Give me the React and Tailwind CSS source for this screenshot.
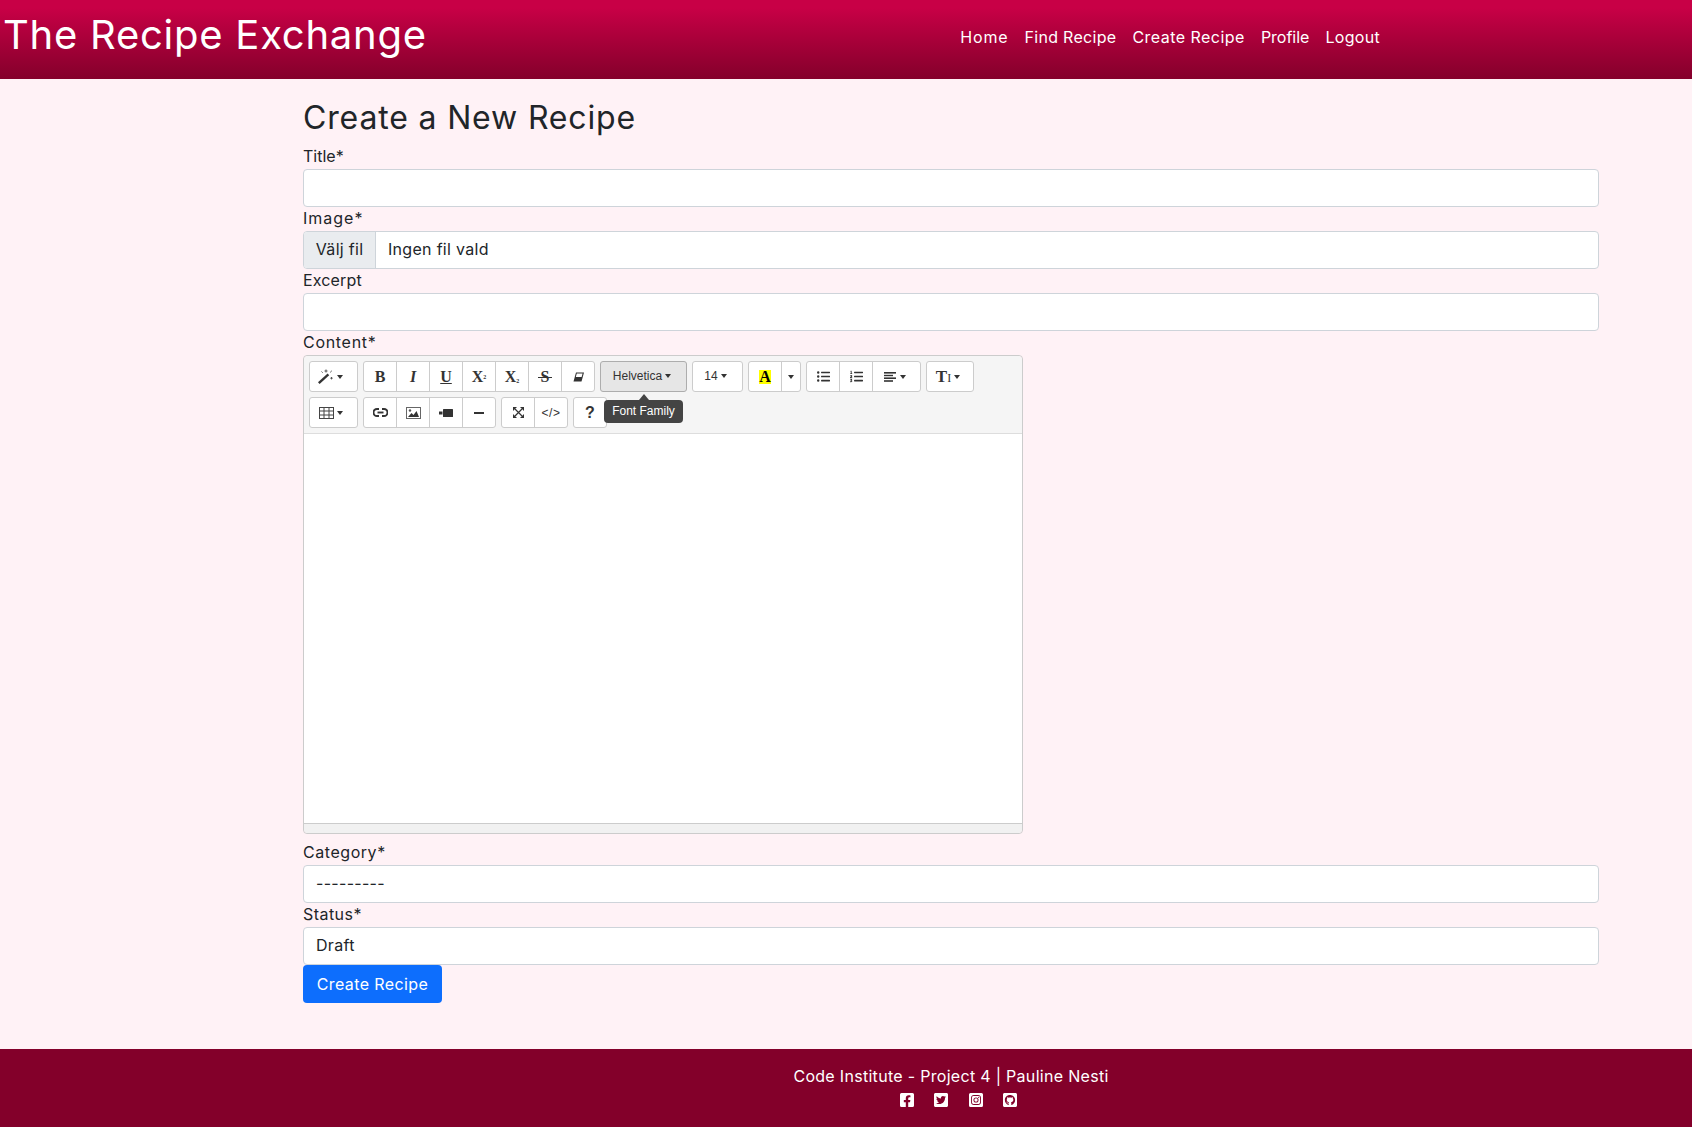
import React from "react";
import {
  FaFacebookSquare,
  FaTwitterSquare,
  FaInstagramSquare,
  FaGithubSquare,
  FaListUl,
  FaListOl,
} from "react-icons/fa";

function Caret() {
  return <span className="w-0 h-0 border-x-[3px] border-x-transparent border-t-[4px] border-t-[#333] shrink-0" />;
}

function Serif({ children, className = "" }) {
  return <span className={`font-['Liberation_Serif',serif] font-bold text-[16px] text-[#333] leading-none ${className}`}>{children}</span>;
}

function MagicIcon() {
  return (
    <svg width="16" height="15" viewBox="0 0 16 15" fill="#333">
      <path d="M0 13.2l9.6-8.7 1.6 1.7-9.6 8.7z" />
      <path d="M8 0.5v3M6.5 2h3M13.5 8v2.4M12.3 9.2h2.4M13.8 1.8l-1.6 1.6M3.5 2.5l1.2 1.2" stroke="#555" strokeWidth="1" fill="none" />
    </svg>
  );
}

function EraserIcon() {
  return (
    <svg width="11" height="10" viewBox="0 0 11 10">
      <path d="M3 0.5h8L8.5 9.5H0.5z" fill="#333" />
      <path d="M3.8 1.5h5.8L8.6 5H2.8z" fill="#fff" />
    </svg>
  );
}

function TableIcon() {
  return (
    <svg width="15" height="12" viewBox="0 0 15 12" fill="none" stroke="#444" strokeWidth="1">
      <rect x="0.5" y="0.5" width="14" height="11" />
      <path d="M5 1v10M10 1v10M1 4h13M1 8h13" />
    </svg>
  );
}

function LinkIcon() {
  return (
    <svg width="15" height="9" viewBox="0 0 15 9" fill="none" stroke="#333" strokeWidth="1.9">
      <path d="M6 1H4a3.5 3.5 0 0 0 0 7h2" />
      <path d="M9 1h2a3.5 3.5 0 0 1 0 7H9" />
      <path d="M4.5 4.5h6" />
    </svg>
  );
}

function PictureIcon() {
  return (
    <svg width="15" height="12" viewBox="0 0 15 12">
      <rect x="0.5" y="0.5" width="14" height="11" fill="#fff" stroke="#666" />
      <path d="M2 10l3.5-4 2 2 3-4 2.5 6z" fill="#333" />
      <circle cx="4" cy="3.5" r="1.2" fill="#555" />
    </svg>
  );
}

function VideoIcon() {
  return (
    <svg width="14" height="8" viewBox="0 0 14 8" fill="#333">
      <rect x="4" y="0" width="10" height="8" rx="0.5" />
      <path d="M0 2.5h3.5v3H0z" />
    </svg>
  );
}

function ExpandIcon() {
  return (
    <svg width="11" height="11" viewBox="0 0 11 11" fill="#333" stroke="#333">
      <path d="M2 2l7 7M9 2l-7 7" strokeWidth="1.2" />
      <path d="M0 0h4L0 4zM11 0v4L7 0zM0 11V7l4 4zM11 11H7l4-4z" stroke="none" />
    </svg>
  );
}

function AlignIcon() {
  return (
    <svg width="12" height="10" viewBox="0 0 12 10" fill="#333">
      <rect y="0" width="12" height="1.6" />
      <rect y="2.8" width="9" height="1.4" />
      <rect y="5.4" width="12" height="1.6" />
      <rect y="8.2" width="9" height="1.6" />
    </svg>
  );
}

function Cell({ width = "w-[33px]", children, last, className = "" }) {
  return (
    <div className={`${width} h-full flex items-center justify-center gap-[3px] ${last ? "" : "border-r border-[#ccc]"} ${className}`}>
      {children}
    </div>
  );
}

function Group({ children }) {
  return <div className="flex h-[31px] bg-white border border-[#ccc] rounded-[3px] shrink-0">{children}</div>;
}

function Field({ label, tracking = "tracking-[0.3px]", children }) {
  return (
    <div>
      <label className={`block h-[24px] leading-[22px] text-[16px] ${tracking}`}>{label}</label>
      {children}
    </div>
  );
}

function TextInput() {
  return <input type="text" className="block w-full h-[38px] bg-white border border-[#ced4da] rounded-[4px] px-3" />;
}

function SelectInput({ value }) {
  return (
    <select className="block w-full h-[38px] bg-white border border-[#ced4da] rounded-[4px] px-3 pb-[2px] appearance-none text-[16px] tracking-[0.3px] text-[#212529]">
      <option>{value}</option>
    </select>
  );
}

function Editor() {
  return (
    <div className="w-[720px] border border-[#ccc] rounded-[4px] font-['Liberation_Sans',sans-serif]">
      <div className="relative bg-[#f5f5f5] border-b border-[#ddd] p-[5px] flex flex-col gap-[5px] rounded-t-[4px]">
        <div className="flex gap-[5px]">
          <Group>
            <Cell width="w-[47px]" className="pr-[6px]" last>
              <MagicIcon />
              <Caret />
            </Cell>
          </Group>
          <Group>
            <Cell><Serif>B</Serif></Cell>
            <Cell><Serif className="italic">I</Serif></Cell>
            <Cell><Serif className="underline">U</Serif></Cell>
            <Cell><Serif>X<sup className="text-[6px]">2</sup></Serif></Cell>
            <Cell><Serif>X<sub className="text-[6px]">2</sub></Serif></Cell>
            <Cell>
              <span className="relative flex">
                <Serif>S</Serif>
                <span className="absolute left-[-3px] right-[-3px] top-[8px] h-[1px] bg-[#333]" />
              </span>
            </Cell>
            <Cell width="w-[32px]" last><EraserIcon /></Cell>
          </Group>
          <div className="flex h-[31px] w-[87px] items-center justify-center gap-[3px] pr-[3px] pb-[2px] bg-[#e6e6e6] border border-[#adadad] rounded-[3px] text-[12px] text-[#333] shrink-0">
            Helvetica <Caret />
          </div>
          <Group>
            <Cell width="w-[49px]" className="pr-[4px] pb-[2px]" last>
              <span className="text-[12px] text-[#333]">14</span>
              <Caret />
            </Cell>
          </Group>
          <Group>
            <Cell>
              <span className="w-[12px] h-[14px] bg-[#ff0] flex items-center justify-center font-['Liberation_Serif',serif] font-bold text-[16px] leading-none text-black">A</span>
            </Cell>
            <Cell width="w-[18px]" last><Caret /></Cell>
          </Group>
          <Group>
            <Cell><FaListUl className="w-[13px] h-[13px] text-[#333]" /></Cell>
            <Cell><FaListOl className="w-[13px] h-[13px] text-[#333]" /></Cell>
            <Cell width="w-[47px]" className="pr-[3px] gap-[4px]" last>
              <AlignIcon />
              <Caret />
            </Cell>
          </Group>
          <Group>
            <Cell width="w-[46px]" className="pr-[4px]" last>
              <Serif className="text-[17px]">T<span className="text-[12px] font-normal">I</span></Serif>
              <Caret />
            </Cell>
          </Group>
        </div>
        <div className="flex gap-[5px]">
          <Group>
            <Cell width="w-[47px]" className="pr-[6px]" last>
              <TableIcon />
              <Caret />
            </Cell>
          </Group>
          <Group>
            <Cell><LinkIcon /></Cell>
            <Cell><PictureIcon /></Cell>
            <Cell><VideoIcon /></Cell>
            <Cell width="w-[32px]" last><div className="w-[10px] h-[2px] bg-[#333]" /></Cell>
          </Group>
          <Group>
            <Cell><ExpandIcon /></Cell>
            <Cell width="w-[32px]" last><span className="text-[12px] text-[#333] tracking-[0.5px]">&lt;/&gt;</span></Cell>
          </Group>
          <Group>
            <Cell width="w-[32px]" last><span className="font-bold text-[16px] text-[#333]">?</span></Cell>
          </Group>
        </div>
        {/* tooltip over the toolbar */}
        <div className="absolute left-[300px] top-[38px] flex flex-col items-center">
          <div className="w-0 h-0 border-x-[5px] border-x-transparent border-b-[6px] border-b-[#444]" />
          <div className="w-[79px] h-[23px] pb-[2px] rounded-[4px] bg-[#444] text-white text-[12px] flex items-center justify-center">Font Family</div>
        </div>
      </div>
      <div className="h-[389px] bg-white" />
      <div className="h-[10px] bg-[#f1f1f1] border-t border-[#ccc] rounded-b-[4px]" />
    </div>
  );
}

export default function App() {
  return (
    <div className="min-h-screen flex flex-col bg-[#fff2f6] text-[#212529] font-['Inter',sans-serif]">
      <header className="h-[79px] bg-gradient-to-b from-[#c80046] from-10% to-[#84002b] flex items-center pl-[3px] pr-[312px] pb-[9px] text-white shrink-0">
        <div className="text-[40px] leading-[48px] tracking-[0.75px]">The Recipe Exchange</div>
        <nav className="ml-auto flex gap-4 text-[16px] tracking-[0.3px] pt-[4px]">
          <a className="tracking-[0.85px]">Home</a>
          <a>Find Recipe</a>
          <a className="tracking-[0.47px]">Create Recipe</a>
          <a className="tracking-normal">Profile</a>
          <a>Logout</a>
        </nav>
      </header>
      <main className="w-[1296px] ml-[303px] pt-[20px] flex-1">
        <h1 className="text-[32px] leading-[38px] mb-2 tracking-[0.84px]">Create a New Recipe</h1>
        <Field label="Title*" tracking="tracking-normal"><TextInput /></Field>
        <Field label="Image*" tracking="tracking-[1px]">
          <div className="flex h-[38px] bg-white border border-[#ced4da] rounded-[4px] text-[16px] tracking-[0.3px] overflow-hidden">
            <div className="w-[72px] pb-[2px] bg-[#e9ecef] border-r border-[#ced4da] flex items-center justify-center">Välj fil</div>
            <div className="pl-3 pb-[2px] flex items-center">Ingen fil vald</div>
          </div>
        </Field>
        <Field label="Excerpt" tracking="tracking-[0.15px]"><TextInput /></Field>
        <Field label="Content*" tracking="tracking-[0.7px]"><Editor /></Field>
        <div className="h-[7px]" />
        <Field label="Category*" tracking="tracking-[0.55px]"><SelectInput value="---------" /></Field>
        <Field label="Status*" tracking="tracking-[0.45px]"><SelectInput value="Draft" /></Field>
        <button className="block w-[139px] h-[38px] pb-[1px] bg-[#0d6efd] text-white rounded-[4px] text-[16px] tracking-[0.4px]">Create Recipe</button>
      </main>
      <footer className="h-[78px] bg-[#83002a] text-white flex flex-col items-center pl-[210px] pt-[15px] shrink-0">
        <p className="text-[16px] leading-[24px] tracking-[0.3px]">Code Institute - Project 4 | Pauline Nesti</p>
        <div className="flex gap-[20.5px] mt-[4px] pl-[15px]">
          <FaFacebookSquare className="w-[14px] h-[16px]" />
          <FaTwitterSquare className="w-[14px] h-[16px]" />
          <FaInstagramSquare className="w-[14px] h-[16px]" />
          <FaGithubSquare className="w-[14px] h-[16px]" />
        </div>
      </footer>
    </div>
  );
}
